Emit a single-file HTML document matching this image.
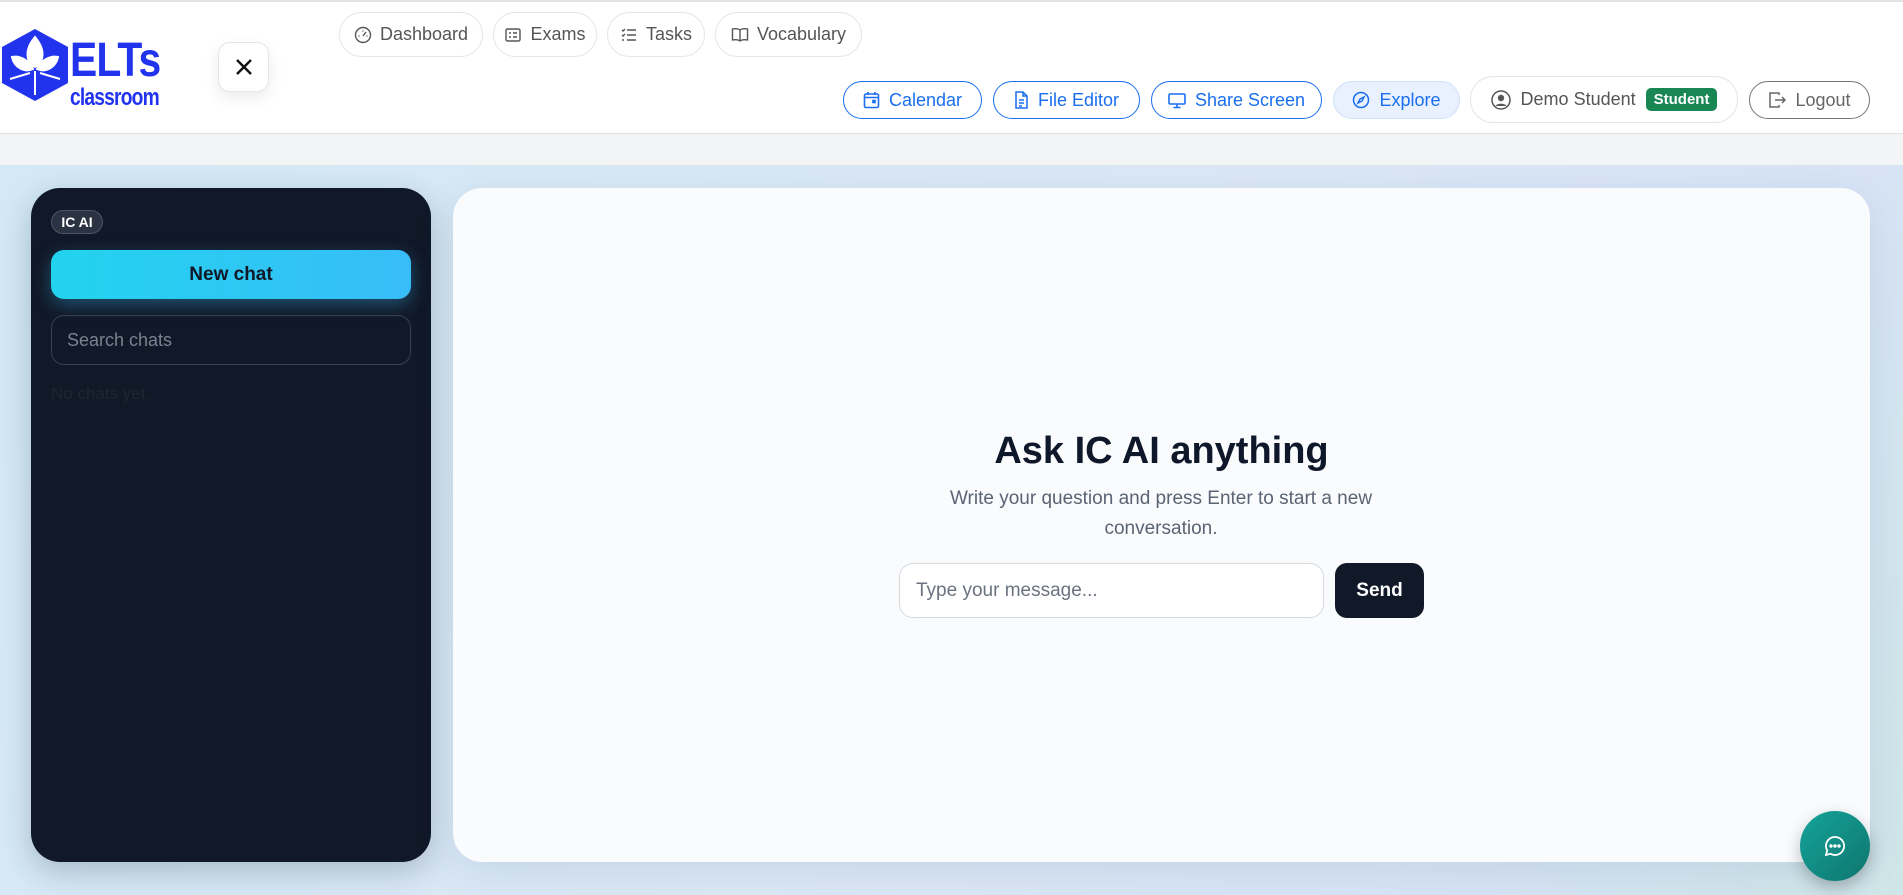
<!DOCTYPE html>
<html><head><meta charset="utf-8"><style>
*{box-sizing:border-box;margin:0;padding:0}
body{width:1903px;height:895px;overflow:hidden;font-family:"Liberation Sans",sans-serif;background:#f3f4f6;position:relative}
.hdr{position:absolute;left:0;top:0;width:1903px;height:134px;background:#fff;border-top:2px solid #e2e2e2;border-bottom:1px solid #e3e3e3}
.band{position:absolute;left:0;top:134px;width:1903px;height:31px;background:#f3f4f6}
.bg{position:absolute;left:0;top:165px;width:1903px;height:730px;background:linear-gradient(120deg,#d3e9f5 0%,#dce8f5 50%,#d8e4f6 80%,#cfe6e8 100%)}
.pill{position:absolute;height:45px;border:1px solid #e6e6e6;border-radius:23px;display:flex;align-items:center;justify-content:center;gap:8px;font-size:18px;color:#555;background:#fff}
.b{position:absolute;top:81px;height:38px;border:1px solid #1a6ef0;border-radius:19px;display:flex;align-items:center;justify-content:center;gap:9px;font-size:18px;color:#1a6ef0;background:#fff}
svg{flex:none}
.side{position:absolute;left:31px;top:188px;width:400px;height:674px;background:#111827;border-radius:29px;box-shadow:0 10px 30px rgba(30,50,80,.25)}
.main{position:absolute;left:453px;top:188px;width:1417px;height:674px;background:#f9fbfd;border-radius:29px;box-shadow:0 10px 40px rgba(60,90,130,.12)}
</style></head><body>
<div class="hdr"></div>
<div class="band"></div>
<div class="bg"></div>
<svg style="position:absolute;left:0;top:27px" width="70" height="76" viewBox="0 0 70 76"><polygon points="35,2 68,20 68,56 35,74 2,56 2,20" fill="#2233ee"/><path d="M35,10 C25,22 25,34 35,40 C45,34 45,22 35,10Z M12,30 C20,28 30,34 33,42 C24,46 14,40 12,30Z M58,30 C50,28 40,34 37,42 C46,46 56,40 58,30Z M35,44 L35,68 M10,52 L30,46 M60,52 L40,46" fill="#fff" stroke="#fff" stroke-width="2"/></svg>
<div style="position:absolute;left:70px;top:36px;font-size:48px;font-weight:bold;color:#2233ee;letter-spacing:-1px;line-height:50px;transform:scaleX(.85);transform-origin:left">ELTs</div>
<div style="position:absolute;left:70px;top:86px;font-size:24px;font-weight:bold;color:#2233ee;line-height:24px;transform:scaleX(.8);transform-origin:left;letter-spacing:-1px">classroom</div>
<div style="position:absolute;left:218px;top:42px;width:51px;height:50px;border:1px solid #e5e5e5;border-radius:12px;background:#fff;box-shadow:0 6px 16px rgba(0,0,0,.08);display:flex;align-items:center;justify-content:center"><svg width="20" height="20" viewBox="0 0 20 20"><path d="M3 3L17 17M17 3L3 17" stroke="#111" stroke-width="2.4"/></svg></div>
<div class="pill" style="left:339px;top:12px;width:144px"><svg width="18" height="18" viewBox="0 0 18 18" fill="none" stroke="#555" stroke-width="1.4"><circle cx="9" cy="9" r="7.5"/><path d="M9 10L12 6M4.5 10h1M12.5 10h1M9 4.5v1"/></svg>Dashboard</div>
<div class="pill" style="left:493px;top:12px;width:104px"><svg width="18" height="18" viewBox="0 0 18 18" fill="none" stroke="#555" stroke-width="1.4"><rect x="2" y="3" width="14" height="12" rx="1.5"/><path d="M5 7h2M9 7h4M5 11h2M9 11h4"/></svg>Exams</div>
<div class="pill" style="left:607px;top:12px;width:98px"><svg width="18" height="18" viewBox="0 0 18 18" fill="none" stroke="#555" stroke-width="1.4"><path d="M7 4h9M7 9h9M7 14h9M2 4l1 1 2-2M2 9l1 1 2-2M2 14h2"/></svg>Tasks</div>
<div class="pill" style="left:715px;top:12px;width:147px"><svg width="18" height="18" viewBox="0 0 18 18" fill="none" stroke="#555" stroke-width="1.4"><path d="M9 4C7 2.5 4 2.5 1.5 3v11c2.5-.5 5.5-.5 7.5 1 2-1.5 5-1.5 7.5-1V3C14 2.5 11 2.5 9 4zM9 4v11"/></svg>Vocabulary</div>
<div class="b" style="left:843px;width:139px"><svg width="17" height="18" viewBox="0 0 17 18" fill="none" stroke="#1a6ef0" stroke-width="1.6"><rect x="1.5" y="3" width="14" height="13.5" rx="1.5"/><path d="M1.5 6.5h14M5 1v3M12 1v3"/><rect x="10" y="9.5" width="2" height="2" fill="#1a6ef0"/></svg>Calendar</div>
<div class="b" style="left:993px;width:147px"><svg width="15" height="18" viewBox="0 0 15 18" fill="none" stroke="#1a6ef0" stroke-width="1.5"><path d="M2 1h7l4 4v12H2zM9 1v4h4M5 9h5M5 12h5M5 15h3"/></svg>File Editor</div>
<div class="b" style="left:1151px;width:171px"><svg width="18" height="17" viewBox="0 0 18 17" fill="none" stroke="#1a6ef0" stroke-width="1.6"><rect x="1" y="2" width="16" height="10" rx="1.2"/><path d="M9 12v3M5.5 15.5h7"/></svg>Share Screen</div>
<div class="b" style="left:1333px;width:127px;background:#e8f1fd;border-color:#cfe0fb"><svg width="18" height="18" viewBox="0 0 18 18" fill="none" stroke="#1a6ef0" stroke-width="1.5"><circle cx="9" cy="9" r="7.5"/><path d="M12 6L10 10 6 12 8 8z"/></svg>Explore</div>
<div class="pill" style="left:1470px;top:76px;width:268px;height:47px;gap:10px"><svg width="20" height="20" viewBox="0 0 20 20"><circle cx="10" cy="10" r="9" fill="none" stroke="#555" stroke-width="1.5"/><circle cx="10" cy="8" r="3.2" fill="#555"/><path d="M4.5 16c1.5-3 9.5-3 11 0" fill="#555"/></svg><span>Demo Student</span><span style="background:#198754;color:#fff;font-weight:bold;font-size:15px;padding:3px 8px;border-radius:5px">Student</span></div>
<div class="b" style="left:1749px;width:121px;border-color:#777;color:#666"><svg width="18" height="18" viewBox="0 0 18 18" fill="none" stroke="#666" stroke-width="1.5"><path d="M11 4V2H2v14h9v-2M7 9h10M14 6l3 3-3 3"/></svg>Logout</div>
<div class="side">
<div style="position:absolute;left:20px;top:22px;width:52px;height:24px;border:1px solid #4b5563;background:#2b3242;border-radius:12px;color:#fff;font-weight:bold;font-size:14px;display:flex;align-items:center;justify-content:center">IC AI</div>
<div style="position:absolute;left:20px;top:62px;width:360px;height:49px;border-radius:13px;background:linear-gradient(90deg,#22d3ee,#38bdf8);box-shadow:0 6px 18px rgba(56,189,248,.35);display:flex;align-items:center;justify-content:center;font-size:19px;font-weight:bold;color:#111827">New chat</div>
<div style="position:absolute;left:20px;top:127px;width:360px;height:50px;border:1px solid #374151;border-radius:13px;padding-left:15px;display:flex;align-items:center;font-size:18px;color:#7b8190">Search chats</div>
<div style="position:absolute;left:20px;top:196px;font-size:17px;color:#1f2632">No chats yet.</div>
</div>
<div class="main">
<div style="position:absolute;left:0;width:100%;top:242px;text-align:center;font-size:38px;font-weight:bold;color:#0f172a">Ask IC AI anything</div>
<div style="position:absolute;left:458px;width:500px;top:296px;text-align:center;font-size:19px;line-height:30px;color:#5b6474">Write your question and press Enter to start a new conversation.</div>
<div style="position:absolute;left:446px;top:375px;width:425px;height:55px;border:1px solid #d6d9de;border-radius:14px;background:#fff;padding-left:16px;display:flex;align-items:center;font-size:19px;color:#6b7280">Type your message...</div>
<div style="position:absolute;left:882px;top:375px;width:89px;height:55px;border-radius:12px;background:#111827;color:#fff;font-weight:bold;font-size:19px;display:flex;align-items:center;justify-content:center">Send</div>
</div>
<div style="position:absolute;left:1800px;top:811px;width:70px;height:70px;border-radius:50%;background:linear-gradient(135deg,#14a39a,#0f766e);box-shadow:0 6px 16px rgba(0,0,0,.25);display:flex;align-items:center;justify-content:center"><svg width="22" height="22" viewBox="0 0 22 22" fill="none" stroke="#fff" stroke-width="1.8"><path d="M11 2a9 9 0 0 0-7.8 13.5L2 20l4.6-1.2A9 9 0 1 0 11 2z"/><circle cx="7" cy="11" r=".8" fill="#fff"/><circle cx="11" cy="11" r=".8" fill="#fff"/><circle cx="15" cy="11" r=".8" fill="#fff"/></svg></div>
</body></html>
